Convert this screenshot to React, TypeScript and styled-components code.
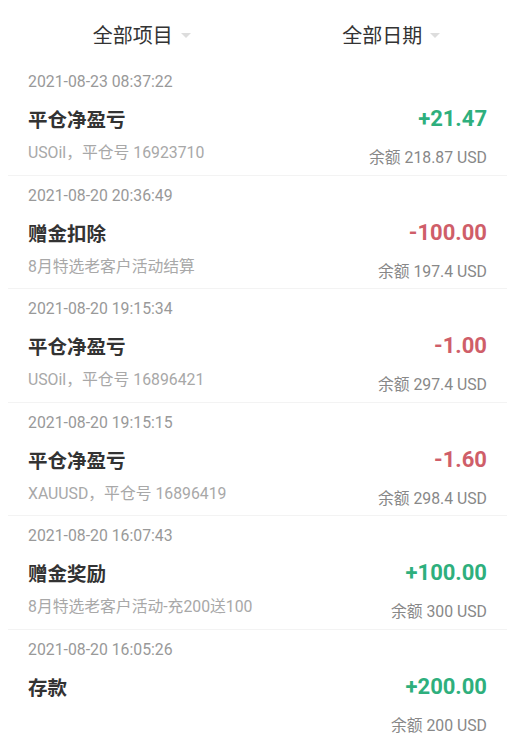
import React from "react";
import styled, { createGlobalStyle } from "styled-components";

const GlobalStyle = createGlobalStyle`
	body {
		margin: 0;
		background: #ffffff;
		font-family: Roboto, "Noto Sans CJK SC", sans-serif;
	}
`;

const Page = styled.div`
	width: 515px;
	background: #fff;
`;

const FilterBar = styled.div`
	display: flex;
	height: 62px;
	margin: 0 8px;
	align-items: center;
`;

const FilterCell = styled.div`
	flex: 1;
	display: flex;
	justify-content: center;
	padding-top: 8px;
`;

const FilterLabel = styled.span`
	position: relative;
	font-size: 20px;
	line-height: 28px;
	color: #333;
	font-family: "Noto Sans CJK SC", sans-serif;
`;

const Caret = styled.span`
	position: absolute;
	left: 100%;
	top: 12px;
	margin-left: 8px;
	width: 0;
	height: 0;
	border-left: 5px solid transparent;
	border-right: 5px solid transparent;
	border-top: 5px solid #ddd;
`;

const Row = styled.div`
	margin: 0 8px;
	padding: 9px 20px 0;
	height: 113.5px;
	box-sizing: border-box;
	border-bottom: 1px solid #f3f3f3;

	&:last-child {
		border-bottom: none;
	}
`;

const DateText = styled.div`
	font-size: 15.8px;
	line-height: 22px;
	color: #999;
`;

const Body = styled.div`
	display: flex;
	justify-content: space-between;
	margin-top: 11px;
`;

const Col = styled.div<{ right?: boolean }>`
	display: flex;
	flex-direction: column;
	align-items: ${p => (p.right ? "flex-end" : "flex-start")};
`;

const Title = styled.div`
	font-size: 19.5px;
	line-height: 30px;
	font-weight: 700;
	color: #333;
	font-family: "Noto Sans CJK SC", sans-serif;
`;

const Sub = styled.div`
	margin-top: 8px;
	font-size: 15.8px;
	line-height: 22px;
	color: #a8a8a8;
`;

const Amount = styled.div<{ positive: boolean }>`
	font-size: 22px;
	line-height: 30px;
	font-weight: 700;
	color: ${p => (p.positive ? "#2eaf7d" : "#cf5e69")};
`;

const Balance = styled.div`
	margin-top: 13px;
	font-size: 15.8px;
	line-height: 22px;
	color: #888;
`;

const records = [
	{ date: "2021-08-23 08:37:22", title: "平仓净盈亏", sub: "USOil，平仓号 16923710", amount: "+21.47", balance: "余额 218.87 USD" },
	{ date: "2021-08-20 20:36:49", title: "赠金扣除", sub: "8月特选老客户活动结算", amount: "-100.00", balance: "余额 197.4 USD" },
	{ date: "2021-08-20 19:15:34", title: "平仓净盈亏", sub: "USOil，平仓号 16896421", amount: "-1.00", balance: "余额 297.4 USD" },
	{ date: "2021-08-20 19:15:15", title: "平仓净盈亏", sub: "XAUUSD，平仓号 16896419", amount: "-1.60", balance: "余额 298.4 USD" },
	{ date: "2021-08-20 16:07:43", title: "赠金奖励", sub: "8月特选老客户活动-充200送100", amount: "+100.00", balance: "余额 300 USD" },
	{ date: "2021-08-20 16:05:26", title: "存款", sub: "", amount: "+200.00", balance: "余额 200 USD" },
];

export default function App() {
	return (
		<Page>
			<GlobalStyle />
			<FilterBar>
				<FilterCell>
					<FilterLabel>全部项目<Caret /></FilterLabel>
				</FilterCell>
				<FilterCell>
					<FilterLabel>全部日期<Caret /></FilterLabel>
				</FilterCell>
			</FilterBar>
			{records.map((r, i) => (
				<Row key={i}>
					<DateText>{r.date}</DateText>
					<Body>
						<Col>
							<Title>{r.title}</Title>
							{r.sub && <Sub>{r.sub}</Sub>}
						</Col>
						<Col right>
							<Amount positive={r.amount.startsWith("+")}>{r.amount}</Amount>
							<Balance>{r.balance}</Balance>
						</Col>
					</Body>
				</Row>
			))}
		</Page>
	);
}
